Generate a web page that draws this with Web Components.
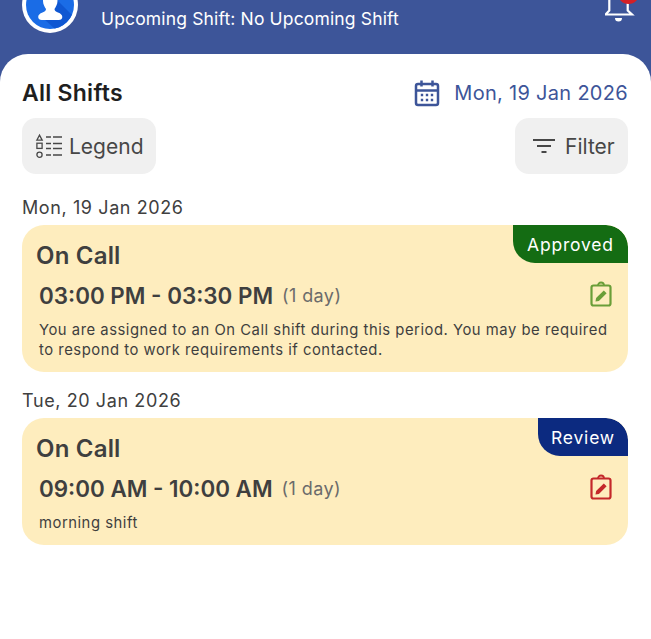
<!DOCTYPE html>
<html><head><meta charset="utf-8">
<style>
html,body{margin:0;padding:0;background:#fff}
body{font-family:Inter,"Noto Sans",sans-serif;color:#3f3f3f;height:639px;overflow:hidden;display:flex;flex-direction:column}
</style></head><body>
<app-header>Upcoming Shift: No Upcoming Shift</app-header>
<shift-panel>
  <shift-toolbar date="Mon, 19 Jan 2026"></shift-toolbar>
  <shift-day date="Mon, 19 Jan 2026">
    <shift-card status="Approved" bw="115" time="03:00 PM - 03:30 PM" dur="(1 day)" badge="#146c13" icon="#6a9e38">You are assigned to an On Call shift during this period. You may be required to respond to work requirements if contacted.</shift-card>
  </shift-day>
  <shift-day date="Tue, 20 Jan 2026">
    <shift-card status="Review" bw="90" time="09:00 AM - 10:00 AM" dur="(1 day)" badge="#0c2a80" icon="#c4282a">morning shift</shift-card>
  </shift-day>
</shift-panel>
<script>
function def(name,html){
  customElements.define(name,class extends HTMLElement{
    constructor(){super();this.attachShadow({mode:'open'})}
    connectedCallback(){
      const a=n=>this.getAttribute(n)||'';
      this.shadowRoot.innerHTML=html(a);
    }
  });
}
def('app-header',()=>`<style>
:host{display:flex;align-items:flex-end;height:82px;flex:none;margin-bottom:-28px;background:#3d5599;color:#fff;overflow:hidden;padding:0 14px 0 22px;box-sizing:border-box}
.row{display:flex;align-items:flex-end;width:100%;height:82px;padding-bottom:49px;box-sizing:border-box}
.av{width:56px;height:56px;flex:none;display:block}
.t{margin-left:23px;font-size:17.5px;font-weight:400;line-height:22px;letter-spacing:.15px;white-space:nowrap;margin-bottom:3px}
.bell{margin-left:auto;width:32px;height:24px;flex:none;display:block;margin-bottom:9px}
</style><div class="row">
<svg class="av" viewBox="0 0 56 56"><defs><clipPath id="c"><circle cx="28" cy="28" r="24"/></clipPath></defs>
<circle cx="28" cy="28" r="28" fill="#fff"/><circle cx="28" cy="28" r="24" fill="#1a6ce6"/>
<g clip-path="url(#c)"><path d="M34 22 L60 48 L44 62 L22 42Z" fill="#0f57d2"/></g>
<path d="M28 16c4.500 0 7.500 3.500 7.500 8 0 3.500-1.800 6-3 8 0 1.500 1 2.500 3.500 3.500 2.800 1 4.300 2.500 4.300 4.500 0 2-1.500 3-3.500 3H19.700c-2 0-3.500-1-3.500-3 0-2 1.500-3.500 4.300-4.500 2.500-1 3.500-2 3.500-3.500-1.200-2-3-4.500-3-8 0-4.500 3-8 7.500-8z" fill="#fff"/></svg>
<div class="t"><slot></slot></div>
<svg class="bell" viewBox="0 0 32 24"><path d="M4.300 -4 V10.500 L0.500 14.500 H27 L22.700 10.500 V-4" fill="none" stroke="#fff" stroke-width="2.200"/><path d="M10 18 h7 a3.500 3.500 0 0 1 -7 0z" fill="#fff"/><circle cx="23.500" cy="-7" r="11" fill="#d32027"/></svg>
</div>`);
def('shift-panel',()=>`<style>
:host{display:block;flex:1;background:#fff;border-radius:28px 28px 0 0;padding:22px 23px 0 22px}
</style><slot></slot>`);
def('shift-toolbar',a=>`<style>
:host{display:block;padding-bottom:5px;font-family:Inter,sans-serif}
.top{display:flex;justify-content:space-between;align-items:center;height:34px}
h2{margin:0;font-size:23px;font-weight:600;color:#1f1f1f;letter-spacing:.25px}
.d{display:flex;align-items:center;color:#3d5599;font-size:20px;letter-spacing:.3px}
.d svg{width:28px;height:28px;margin-right:13px;display:block}
.btns{display:flex;justify-content:space-between;margin-top:8px}
.b{display:flex;align-items:center;height:56px;background:#f0f0f0;border-radius:14px;box-sizing:border-box;font-size:21px;color:#474747}
.l{width:134px;padding-left:13px}.l svg{width:28px;height:28px;margin-right:6px}
.f{width:113px;padding-left:17px}.f svg{width:24px;height:24px;margin-right:9px}
</style><div class="top"><h2>All Shifts</h2><div class="d">
<svg viewBox="0 0 28 28" fill="none" stroke="#3d5599" stroke-width="2.500"><rect x="3" y="5" width="22" height="21" rx="2"/><path d="M3 11.500h22M8.500 1.500v6M19.500 1.500v6"/><path stroke-width="2.400" stroke-dasharray="2.400 2.600" d="M7.800 16h13M7.800 21h13"/></svg>${a('date')}</div></div>
<div class="btns"><div class="b l"><svg viewBox="0 0 28 28" fill="none" stroke="#474747" stroke-width="1.300"><path d="M1.800 8.200 L4.500 3.200 L7.200 8.200Z"/><rect x="1.900" y="11.200" width="5.200" height="5.200"/><circle cx="4.500" cy="22.800" r="2.600"/><path stroke-width="1.600" d="M11 5h5M18 5h9M11 11.500h5M18 11.500h9M11 16.500h5M18 16.500h9M11 23h5M18 23h9"/></svg>Legend</div>
<div class="b f"><svg viewBox="0 0 24 24" fill="none" stroke="#474747" stroke-width="2.200"><path d="M1 6h22M5 12h14M9.500 18h5"/></svg>Filter</div></div>`);
def('shift-day',a=>`<style>
:host{display:block;margin-top:16px}
.h{font-size:18px;line-height:26px;letter-spacing:.6px;color:#404040;margin-bottom:4px;font-family:Inter,sans-serif}
</style><div class="h">${a('date')}</div><slot></slot>`);
def('shift-card',a=>`<style>
:host{display:block;position:relative;background:#feedbe;border-radius:22px;padding:15px 14px 12px 14px;font-family:Inter,sans-serif;color:#3f3f3f;overflow:hidden}
.b{position:absolute;top:0;right:0;height:38px;width:${a('bw')}px;display:flex;align-items:center;justify-content:center;background:${a('badge')};color:#fff;font-size:17.500px;letter-spacing:.8px;border-radius:0 22px 0 22px}
h3{margin:0;font-size:24px;line-height:32px;font-weight:600;letter-spacing:.2px}
.r{display:flex;align-items:center;margin:7px 0 0 3px;height:32px}
.tm{font-size:22.400px;font-weight:600}
.du{font-size:18px;color:#6b6b6b;margin-left:9px;letter-spacing:.4px}
.r svg{margin:-2px 0 0 auto;width:26px;height:26px}
.p{margin:9px 0 0 3px;font-size:14.800px;line-height:20px;letter-spacing:.53px;font-weight:400}
</style><div class="b">${a('status')}</div><h3>On Call</h3>
<div class="r"><span class="tm">${a('time')}</span><span class="du">${a('dur')}</span>
<svg viewBox="0 0 26 26" fill="none" stroke="${a('icon')}" stroke-width="2.200"><rect x="3.500" y="4.500" width="19" height="20" rx="2"/><path d="M10 4.500 a3 3 0 0 1 6 0" stroke-width="1.800"/><path stroke="none" fill="${a('icon')}" d="M7.500 20.500 l.6-3.400 7.700-7.700 2.800 2.800 -7.700 7.700z"/></svg></div>
<p class="p"><slot></slot></p>`);
</script>
</body></html>
